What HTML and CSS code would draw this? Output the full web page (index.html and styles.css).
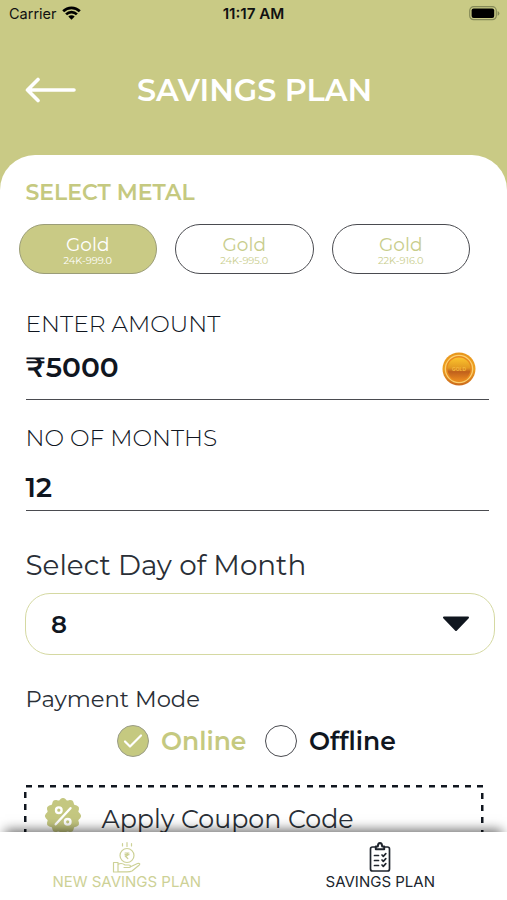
FILE: index.html
```html
<!DOCTYPE html>
<html lang="en">
<head>
<meta charset="utf-8">
<title>Savings Plan</title>
<link rel="stylesheet" href="styles.css">
</head>
<body>
<div class="app">
  <header class="header">
    <div class="status">
      <div class="carrier"><span>Carrier</span>
        <svg width="19" height="14" viewBox="0 0 19 14" fill="none" stroke="#000" stroke-width="2.700"><path d="M1.200 5.200a11.800 11.800 0 0 1 16.600 0"/><path d="M4.100 8.400a7.600 7.600 0 0 1 10.800 0"/><path d="M9.500 13.800 6.300 10.600a4.500 4.500 0 0 1 6.400 0z" fill="#000" stroke="none"/></svg>
      </div>
      <time>11:17 AM</time>
      <svg class="battery" width="31" height="15" viewBox="0 0 31 15"><rect x=".7" y=".7" width="26.600" height="13" rx="4" fill="none" stroke="#858a58" stroke-width="1.200"/><rect x="2.600" y="2.600" width="22.600" height="9.400" rx="2"/><path d="M28.600 5v4.800q1.800-.8 1.800-2.400t-1.800-2.400z" fill="#858a58"/></svg>
    </div>
    <div class="title-row">
      <svg width="52" height="26" viewBox="0 0 52 26" fill="none" stroke="#fff" stroke-width="3.600" stroke-linecap="round" stroke-linejoin="round"><path d="M49 13H2.500M13 2.500 2.500 13 13 23.500"/></svg>
      <h1>SAVINGS PLAN</h1>
    </div>
  </header>

  <main class="sheet">
    <h2>SELECT METAL</h2>
    <div class="metals">
      <button class="metal active"><span class="name">Gold</span><span class="purity">24K-999.0</span></button>
      <button class="metal"><span class="name">Gold</span><span class="purity">24K-995.0</span></button>
      <button class="metal"><span class="name">Gold</span><span class="purity">22K-916.0</span></button>
    </div>

    <section class="field amount">
      <div class="label">ENTER AMOUNT</div>
      <div class="value"><span>₹5000</span>
        <svg class="coin" width="34" height="34" viewBox="0 0 34 34">
          <defs><linearGradient id="rim" x1="0" y1="0" x2="0" y2="1"><stop offset="0" stop-color="#e8961c"/><stop offset=".5" stop-color="#eda022"/><stop offset="1" stop-color="#cc6a1c"/></linearGradient>
          <linearGradient id="face" x1="0" y1="0" x2="0" y2="1"><stop offset="0" stop-color="#fbc42d"/><stop offset=".45" stop-color="#e39a22"/><stop offset=".62" stop-color="#c0601c"/><stop offset="1" stop-color="#ea8a20"/></linearGradient></defs>
          <circle cx="17" cy="17" r="16.500" fill="url(#rim)"/><circle cx="17" cy="17" r="13.600" fill="#e8891c" stroke="#fbd070" stroke-width="1.300"/><circle cx="17" cy="17" r="11.500" fill="url(#face)"/><text x="17" y="18.500" text-anchor="middle" class="coin-text">GOLD</text>
        </svg>
      </div>
    </section>
    <section class="field months">
      <div class="label">NO OF MONTHS</div>
      <div class="value">12</div>
    </section>

    <div class="day-label">Select Day of Month</div>
    <div class="select"><span>8</span>
      <svg width="28" height="16" viewBox="0 0 28 16"><path d="M2 1.500h24L14 14z" fill="#10161f" stroke="#10161f" stroke-width="2" stroke-linejoin="round"/></svg>
    </div>

    <div class="mode-label">Payment Mode</div>
    <div class="modes">
      <div class="mode on"><i class="radio"><svg width="20" height="16" viewBox="0 0 20 16" fill="none" stroke="#fff" stroke-width="2.200" stroke-linecap="round" stroke-linejoin="round"><path d="M2 8.500 7 13.500 18 2.500"/></svg></i><span>Online</span></div>
      <div class="mode"><i class="radio"></i><span>Offline</span></div>
    </div>

    <div class="coupon">
      <svg width="38" height="38" viewBox="-19 -19 38 38"><path id="seal" fill="#c4c780" stroke="#c4c780" stroke-linejoin="round" stroke-width="2"/><circle cx="-4.200" cy="-5.800" r="2.800"/><circle cx="4.700" cy="5.800" r="2.800"/><path d="M7.500-7.800-7.300 8.300"/></svg>
      <span>Apply Coupon Code</span>
    </div>
  </main>

  <nav class="tabs">
    <a class="tab current">
      <svg width="30" height="32" viewBox="0 0 30 32" fill="none" stroke="#cdd196" stroke-width="1.200" stroke-linecap="round" stroke-linejoin="round"><circle cx="15" cy="14.500" r="7"/><path d="M13 12h4M13 13.700h4M13.200 12c3.600 0 3.600 3 0 3l2.600 2.500M15 1.500v4M10.500 2.500v2.500M19.500 2.500v2.500M1.500 21.500h4.500v9.500H1.500zM6 23.500c3-2 5-1 7 .5h4c2 0 2 2.500 0 2.500h-5M18 26l7.500-3.500c2-.5 3 .5 1.500 1.800L20 30c-1.500.8-3 .8-5 .8H6"/></svg>
      <span>NEW SAVINGS PLAN</span>
    </a>
    <a class="tab">
      <svg width="22" height="32" viewBox="0 0 22 32" fill="none" stroke="#20262e" stroke-width="1.700" stroke-linecap="round" stroke-linejoin="round"><path d="M6 6H3.500Q1.500 6 1.500 8v20q0 2 2 2h15q2 0 2-2V8q0-2-2-2H16"/><path d="M6.800 8.300V5.500h2Q9 2 11 2t2.200 3.500h2v2.800z" stroke-width="2"/><path d="M5.500 14.500h4M5.500 19.500h4M5.500 24.500h4M13 14l1.300 1.300 2.500-2.600M13 19l1.300 1.300 2.500-2.600M13 24l1.300 1.300 2.500-2.600"/></svg>
      <span>SAVINGS PLAN</span>
    </a>
  </nav>
</div>
<script src="seal.js"></script>
</body>
</html>
```
FILE: seal.js
```js
// Scalloped outline of the coupon badge
const points = [];
for (let a = 0; a < 360; a += 5) {
  const r = 16 + 1.1 * Math.cos(12 * a * Math.PI / 180);
  points.push((r * Math.sin(a * Math.PI / 180)).toFixed(2) + ' ' + (-r * Math.cos(a * Math.PI / 180)).toFixed(2));
}
document.getElementById('seal').setAttribute('d', 'M' + points.join('L') + 'Z');
```
FILE: styles.css
```css
* { box-sizing: border-box; }
body { margin: 0; font-family: Montserrat, Inter, "Liberation Sans", sans-serif; color: #10161f; }
.app { width: 507px; height: 900px; overflow: hidden; display: flex; flex-direction: column; background: linear-gradient(#c9ca85 190px, #fff 190px); }
h1, h2 { margin: 0; font-weight: 600; }
svg { display: block; flex: none; }
span { white-space: nowrap; }

.header { flex: none; height: 155px; }
.status { height: 28px; padding: 0 7px 0 9px; display: grid; grid-template-columns: 1fr auto 1fr; align-items: center; font: 14.500px/28px Inter, sans-serif; color: #111; }
.carrier { display: flex; align-items: center; gap: 5px; }
.carrier svg { margin-top: -2px; }
.status time { font-weight: 600; font-size: 15.200px; color: #111; margin-right: 2px; }
.battery { justify-self: end; margin-top: -1px; }
.title-row { height: 124px; display: flex; align-items: center; padding-left: 25px; }
.title-row h1 { margin: 2px 0 0 60px; font-size: 30.400px; line-height: 36px; color: #fff; }

.sheet { flex: none; height: 676.500px; padding-top: 22px; background: #fff; border-radius: 35px 35px 0 0; overflow: hidden; }
h2 { margin-left: 25.500px; height: 32px; line-height: 32px; font-size: 22px; color: #c5c980; }
.metals { display: flex; gap: 18px; margin: 15px 0 0 18.500px; }
.metal { width: 138.500px; height: 50px; padding: 9.500px 0 0; border: 1.500px solid #4a4b50; border-radius: 25px; background: #fff; color: #c8cd8c; font-family: inherit; display: flex; flex-direction: column; align-items: center; }
.metal.active { background: #c9ca85; border-color: #9b9d78; color: #fff; }
.name { font-size: 18.500px; line-height: 19px; }
.purity { font-size: 9.800px; line-height: 11px; margin-top: 1px; }

.field { margin: 0 18px 0 25.500px; border-bottom: 1.500px solid #4a4b50; }
.label { font-size: 23.300px; line-height: 30px; font-weight: 300; }
.value { display: flex; justify-content: space-between; font-weight: 600; font-size: 28px; line-height: 36px; color: #10161f; }
.amount { height: 126px; padding-top: 35px; }
.amount .value { margin-top: 10px; }
.coin { margin: 3px 13px 0 0; }
.coin-text { font: 700 5px Inter, sans-serif; fill: #f4b63c; }
.months { height: 111px; padding-top: 22.500px; }
.months .value { margin-top: 16.500px; font-size: 27.500px; }

.day-label { margin: 36px 0 0 25.500px; font-size: 27.800px; line-height: 36px; }
.select { margin: 10px 12px 0 25px; height: 61.500px; border: 1.500px solid #d5d9a2; border-radius: 25px; padding: 0 24px 0 25px; display: flex; align-items: center; justify-content: space-between; font-size: 24.500px; font-weight: 600; }
.mode-label { margin: 29px 0 0 25.500px; font-size: 22.700px; line-height: 30px; }
.day-label, .mode-label, .coupon { color: #2a2f37; }
.modes { margin: 11px 0 0 117px; display: flex; height: 32px; }
.mode { width: 148px; display: flex; align-items: center; gap: 12px; font-size: 25px; font-weight: 600; }
.mode.on { color: #c5c980; }
.radio { width: 32px; height: 32px; flex: none; border: 1.500px solid #4a4b50; border-radius: 50%; display: flex; align-items: center; justify-content: center; }
.on .radio { background: #c5c980; border-color: #9b9d88; }

.coupon { margin: 28px 23px 0 24px; height: 72px; padding: 0 0 5px 20px; display: flex; align-items: center; font-size: 25.300px;
  background:
    repeating-linear-gradient(90deg, #10161f 0 6px, transparent 6px 12.200px) 2px 0 / 458px 2.500px no-repeat,
    repeating-linear-gradient(#10161f 0 6px, transparent 6px 12.200px) 0 7.500px / 2.500px 70px no-repeat,
    repeating-linear-gradient(#10161f 0 6px, transparent 6px 12.200px) 457px 8px / 2.500px 70px no-repeat; }
.coupon svg { margin-top: -5px; fill: none; stroke: #fff; stroke-width: 2.400; stroke-linecap: round; }
.coupon span { margin: 1px 0 0 19.500px; }

.tabs { flex: none; position: relative; height: 68.500px; background: #fff; display: grid; grid-template-columns: 1fr 1fr; box-shadow: 0 -7px 11px -5px rgba(0,0,0,.6); }
.tab { display: flex; flex-direction: column; align-items: center; padding-top: 9.500px; font: 15px/18px Inter, sans-serif; color: #20262e; }
.tab.current { color: #cdd196; }
```
